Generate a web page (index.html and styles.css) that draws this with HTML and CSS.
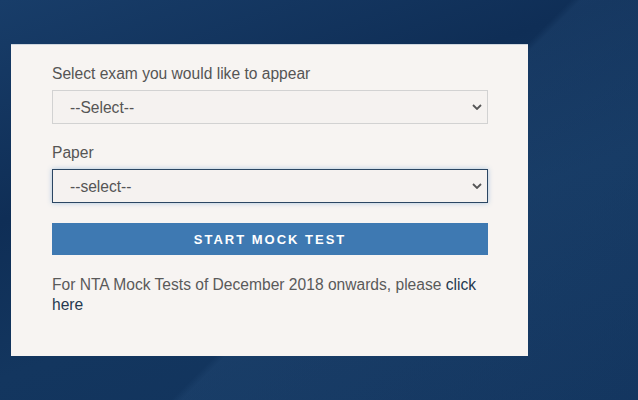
FILE: index.html
```html
<!DOCTYPE html>
<html lang="en">

<head>
  <meta charset="UTF-8">
  <meta name="viewport" content="width=device-width, initial-scale=1.0">
  <title>Mock Test</title>
  <link rel="stylesheet" href="styles.css">
</head>

<body>
  <main class="page">
    <form class="mock-box">
      <label class="field-label" for="exam">Select exam you would like to appear</label>
      <div class="select-wrap">
        <select id="exam" class="field-select">
          <option>--Select--</option>
        </select>
        <svg class="chevron" width="10" height="6" viewBox="0 0 10 6"><path d="M1 1l4 4 4-4" fill="none" stroke="#555" stroke-width="1.8"/></svg>
      </div>

      <label class="field-label" for="paper">Paper</label>
      <div class="select-wrap focused">
        <select id="paper" class="field-select">
          <option>--select--</option>
        </select>
        <svg class="chevron" width="10" height="6" viewBox="0 0 10 6"><path d="M1 1l4 4 4-4" fill="none" stroke="#555" stroke-width="1.8"/></svg>
      </div>

      <button type="button" class="start-btn">START MOCK TEST</button>

      <p class="note">For NTA Mock Tests of December 2018 onwards, please <a href="#">click here</a></p>
    </form>
  </main>
</body>

</html>
```

FILE: styles.css
```css
body {
  margin: 0;
  font-family: 'Liberation Sans', Arial, sans-serif;
  background-color: #123259;
}

.page {
  height: 400px;
  overflow: hidden;
  padding: 44px 0 0 11px;
  box-sizing: border-box;
  background:
    linear-gradient(135deg, rgba(255, 255, 255, 0) 55%, rgba(40, 80, 125, 0.3) 56%, rgba(30, 70, 115, 0.2) 100%),
    linear-gradient(160deg, #183d69 0%, #0f2e56 35%, #13365f 60%, #11325b 100%);
}

.mock-box {
  width: 517px;
  height: 312px;
  box-sizing: border-box;
  padding: 20px 40px 0 41px;
  background: #f7f4f2;
  border-top: 1px solid #cfd6de;
}

.field-label {
  display: block;
  font-size: 15.6px;
  color: #555;
  line-height: 18px;
  margin-bottom: 7px;
}

.select-wrap {
  position: relative;
  height: 34px;
  margin-bottom: 20px;
}

.field-select {
  width: 100%;
  height: 34px;
  padding: 0 0 0 17px;
  border: 1px solid #d2d2d2;
  background: #f5f2f0;
  color: #555;
  font-family: inherit;
  font-size: 15.6px;
  appearance: none;
  -webkit-appearance: none;
}

.select-wrap.focused .field-select {
  border: 1px solid #2b4663;
  box-shadow: 0 0 5px rgba(80, 140, 200, 0.45);
}

.chevron {
  position: absolute;
  right: 6px;
  top: 14px;
}

.start-btn {
  display: block;
  width: 100%;
  height: 32px;
  border: none;
  background: #3e79b2;
  color: #fff;
  font-family: inherit;
  font-weight: 700;
  font-size: 13px;
  letter-spacing: 2px;
  cursor: pointer;
}

.note {
  margin: 20px 0 0;
  font-size: 15.6px;
  line-height: 20px;
  color: #5a5a5a;
}

.note a {
  color: #24384f;
  text-decoration: none;
}
```
